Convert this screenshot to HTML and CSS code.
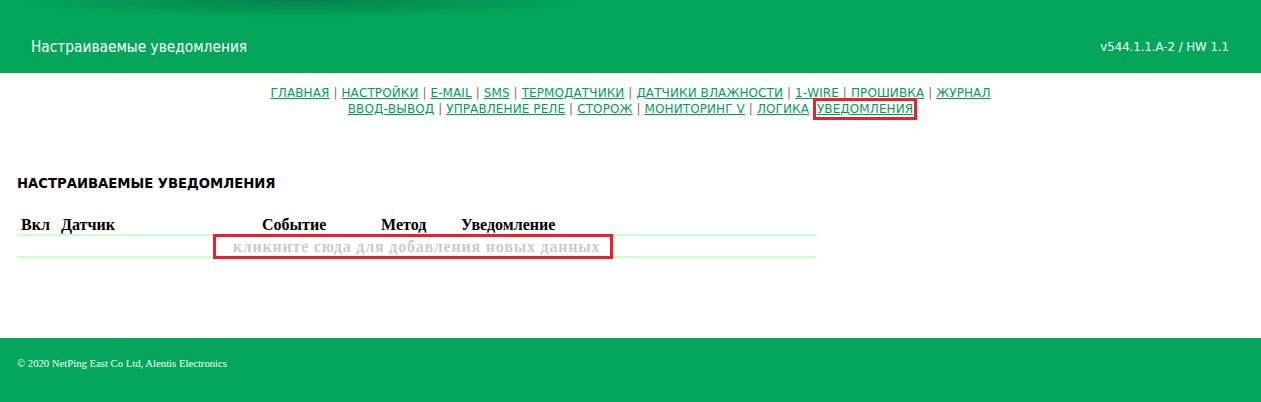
FILE: index.html
```
<!DOCTYPE html>
<html>
    <head>
        <meta charset="utf-8">
        <title>Настраиваемые уведомления</title>
        <link rel="stylesheet" href="styles.css">
    </head>
    <body>
        <div class="header">
            <div class="title">Настраиваемые уведомления</div>
            <div class="version">v544.1.1.A-2 / HW 1.1</div>
        </div>

        <div class="menu">
            <div>
                <a href="#">ГЛАВНАЯ</a> | <a href="#">НАСТРОЙКИ</a> | <a href="#">E-MAIL</a> | <a href="#">SMS</a> | <a href="#">ТЕРМОДАТЧИКИ</a> | <a href="#">ДАТЧИКИ ВЛАЖНОСТИ</a> | <a href="#">1-WIRE</a> | <a href="#">ПРОШИВКА</a> | <a href="#">ЖУРНАЛ</a>
            </div>
            <div>
                <a href="#">ВВОД-ВЫВОД</a> | <a href="#">УПРАВЛЕНИЕ РЕЛЕ</a> | <a href="#">СТОРОЖ</a> | <a href="#">МОНИТОРИНГ V</a> | <a href="#">ЛОГИКА</a> <a href="#" class="current">УВЕДОМЛЕНИЯ</a>
            </div>
        </div>

        <div class="content">
            <h2>НАСТРАИВАЕМЫЕ УВЕДОМЛЕНИЯ</h2>
            <table class="notify" cellspacing="0">
                <tr>
                    <th class="c-on">Вкл</th>
                    <th class="c-sensor">Датчик</th>
                    <th class="c-event">Событие</th>
                    <th class="c-method">Метод</th>
                    <th class="c-note">Уведомление</th>
                </tr>
                <tr>
                    <td colspan="5" class="add-row"><span class="add-link">кликните сюда для добавления новых данных</span></td>
                </tr>
            </table>
        </div>

        <div class="footer">© 2020 NetPing East Co Ltd, Alentis Electronics</div>
    </body>
</html>
```
FILE: styles.css
```
body{
    margin: 0;
    background: #ffffff;
    font-family: "DejaVu Sans Condensed", "DejaVu Sans", sans-serif;
    color: #000000;
}

.header{
    height: 73px;
    box-sizing: border-box;
    padding: 20px 32px 0 31px;
    display: flex;
    align-items: center;
    justify-content: space-between;
    color: #ffffff;
    background: radial-gradient(ellipse 290px 18px at 300px 0, rgba(10, 60, 40, 0.35), rgba(10, 60, 40, 0)), #03a65b;
}

.title{
    font-size: 15.3px;
}

.version{
    font-size: 13px;
}

.menu{
    margin-top: 12px;
    text-align: center;
    font-family: "DejaVu Sans", sans-serif;
    font-size: 12px;
    line-height: 16px;
    letter-spacing: 0.1px;
    color: #8a7048;
}

.menu a{
    color: #009e55;
}

.menu a.current{
    outline: 3px solid #e8212b;
    outline-offset: 1px;
    margin-left: 4px;
}

.content{
    padding: 0 17px;
}

h2{
    margin: 57px 0 0 0;
    font-size: 14.7px;
    line-height: 17px;
}

.notify{
    margin-top: 25px;
    width: 800px;
    font-family: "Liberation Serif", serif;
    font-size: 16px;
}

.notify th{
    text-align: left;
    padding: 0 4px;
    height: 18px;
    line-height: 18px;
    border-bottom: 2px solid #ccffcc;
}

.c-on{ width: 32px; }
.c-sensor{ width: 193px; }
.c-event{ width: 111px; }
.c-method{ width: 72px; }

.notify td.add-row{
    text-align: center;
    height: 20px;
    padding: 0;
    border-bottom: 2px solid #ccffcc;
}

.add-link{
    display: inline-block;
    margin-right: 8px;
    color: #cccccc;
    font-weight: bold;
    letter-spacing: 0.8px;
    line-height: 18px;
    padding: 1px 10px 0 17px;
    outline: 3px solid #e8212b;
    cursor: pointer;
}

.footer{
    margin-top: 80px;
    height: 64px;
    box-sizing: border-box;
    padding: 19px 17px 0;
    background: #03a65b;
    color: #ffffff;
    font-family: "Liberation Serif", serif;
    font-size: 10.7px;
}
```
